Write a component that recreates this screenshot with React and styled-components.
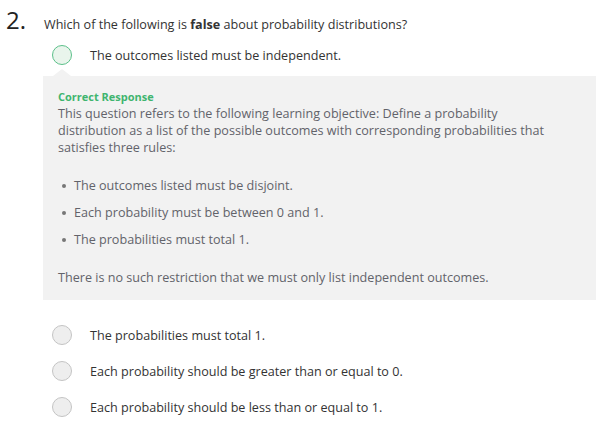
import React from 'react';
import styled, { createGlobalStyle } from 'styled-components';

const GlobalStyle = createGlobalStyle`
    body {
        margin: 0;
        background: #fff;
        font-family: 'Open Sans', 'Liberation Sans', sans-serif;
    }
`

const Question = styled.div`
    width: 609px;
    padding: 6px 13px 0 6px;
    box-sizing: border-box;
`

const Prompt = styled.div`
    display: flex;
    align-items: baseline;
    color: #333;

    .num {
        width: 38px;
        font-size: 24px;
        line-height: 28px;
        color: #222;
    }
    .txt {
        font-size: 12.6px;
    }
    b {
        font-weight: 700;
    }
`

const Options = styled.div`
    display: flex;
    flex-direction: column;
    padding-left: 37px;
    margin-top: 8px;
`

const Option = styled.div`
    display: flex;
    align-items: center;
    height: ${p => p.$h || 36}px;
    font-size: 12.6px;
    color: #333;
`

const Radio = styled.span`
    width: 18px;
    height: 18px;
    border-radius: 50%;
    flex: none;
    margin: 0 18px 0 9px;
    border: 1px solid ${p => p.$correct ? '#5cc08a' : '#c4c4c4'};
    background: ${p => p.$correct ? '#e9f5ec' : '#eeeeee'};
`

const Feedback = styled.div`
    position: relative;
    background: #f2f2f2;
    margin-top: 8px;
    margin-bottom: 17px;
    padding: 13px 40px 14px 15px;
    color: #62636a;
    font-size: 12.6px;
    line-height: 17px;

    &:before {
        content: '';
        position: absolute;
        top: -7px;
        left: 10px;
        border-left: 9px solid transparent;
        border-right: 9px solid transparent;
        border-bottom: 7px solid #f2f2f2;
    }

    .label {
        color: #3fb56f;
        font-weight: 700;
        font-size: 11px;
        line-height: 16px;
    }
    p {
        margin: 0;
    }
    ul {
        margin: 21px 0 21px;
        padding-left: 16px;
        list-style: none;
    }
    li {
        position: relative;
        line-height: 17px;
        margin-bottom: 10px;
    }
    li:before {
        content: '';
        position: absolute;
        left: -12px;
        top: 7px;
        width: 4px;
        height: 4px;
        border-radius: 50%;
        background: #777;
    }
`

export default function App() {
    return (
        <>
            <GlobalStyle />
            <Question>
                <Prompt>
                    <span className='num'>2.</span>
                    <span className='txt'>Which of the following is <b>false</b> about probability distributions?</span>
                </Prompt>
                <Options>
                    <Option $h={26}>
                        <Radio $correct />
                        The outcomes listed must be independent.
                    </Option>
                    <Feedback>
                        <div className='label'>Correct Response</div>
                        <p>
                            This question refers to the following learning objective: Define a probability
                            distribution as a list of the possible outcomes with corresponding probabilities that
                            satisfies three rules:
                        </p>
                        <ul>
                            <li>The outcomes listed must be disjoint.</li>
                            <li>Each probability must be between 0 and 1.</li>
                            <li>The probabilities must total 1.</li>
                        </ul>
                        <p>There is no such restriction that we must only list independent outcomes.</p>
                    </Feedback>
                    <Option>
                        <Radio />
                        The probabilities must total 1.
                    </Option>
                    <Option>
                        <Radio />
                        Each probability should be greater than or equal to 0.
                    </Option>
                    <Option>
                        <Radio />
                        Each probability should be less than or equal to 1.
                    </Option>
                </Options>
            </Question>
        </>
    )
}
